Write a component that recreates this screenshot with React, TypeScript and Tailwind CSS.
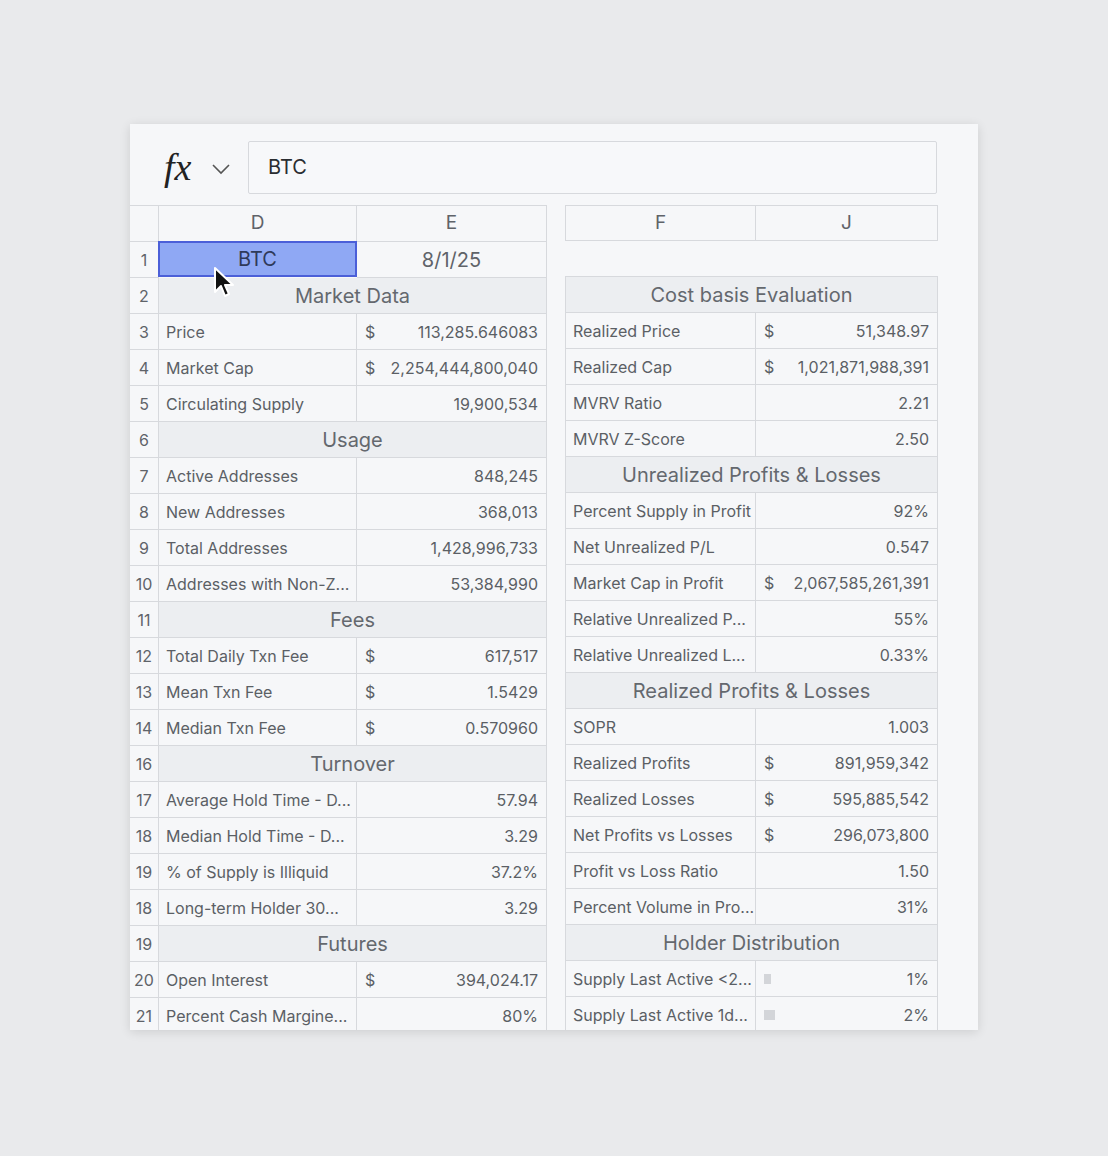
import React from "react";

type Row =
  | { t: "s"; title: string }
  | { t: "d"; label: string; dollar?: boolean; value: string; bar?: number }
  | { t: "e" };

const left: [string, Row][] = [
  ["2", { t: "s", title: "Market Data" }],
  ["3", { t: "d", label: "Price", dollar: true, value: "113,285.646083" }],
  ["4", { t: "d", label: "Market Cap", dollar: true, value: "2,254,444,800,040" }],
  ["5", { t: "d", label: "Circulating Supply", value: "19,900,534" }],
  ["6", { t: "s", title: "Usage" }],
  ["7", { t: "d", label: "Active Addresses", value: "848,245" }],
  ["8", { t: "d", label: "New Addresses", value: "368,013" }],
  ["9", { t: "d", label: "Total Addresses", value: "1,428,996,733" }],
  ["10", { t: "d", label: "Addresses with Non-Z...", value: "53,384,990" }],
  ["11", { t: "s", title: "Fees" }],
  ["12", { t: "d", label: "Total Daily Txn Fee", dollar: true, value: "617,517" }],
  ["13", { t: "d", label: "Mean Txn Fee", dollar: true, value: "1.5429" }],
  ["14", { t: "d", label: "Median Txn Fee", dollar: true, value: "0.570960" }],
  ["16", { t: "s", title: "Turnover" }],
  ["17", { t: "d", label: "Average Hold Time - D...", value: "57.94" }],
  ["18", { t: "d", label: "Median Hold Time - D...", value: "3.29" }],
  ["19", { t: "d", label: "% of Supply is Illiquid", value: "37.2%" }],
  ["18", { t: "d", label: "Long-term Holder 30...", value: "3.29" }],
  ["19", { t: "s", title: "Futures" }],
  ["20", { t: "d", label: "Open Interest", dollar: true, value: "394,024.17" }],
  ["21", { t: "d", label: "Percent Cash Margine...", value: "80%" }],
];

const right: Row[] = [
  { t: "s", title: "Cost basis Evaluation" },
  { t: "d", label: "Realized Price", dollar: true, value: "51,348.97" },
  { t: "d", label: "Realized Cap", dollar: true, value: "1,021,871,988,391" },
  { t: "d", label: "MVRV Ratio", value: "2.21" },
  { t: "d", label: "MVRV Z-Score", value: "2.50" },
  { t: "s", title: "Unrealized Profits & Losses" },
  { t: "d", label: "Percent Supply in Profit", value: "92%" },
  { t: "d", label: "Net Unrealized P/L", value: "0.547" },
  { t: "d", label: "Market Cap in Profit", dollar: true, value: "2,067,585,261,391" },
  { t: "d", label: "Relative Unrealized P...", value: "55%" },
  { t: "d", label: "Relative Unrealized L...", value: "0.33%" },
  { t: "s", title: "Realized Profits & Losses" },
  { t: "d", label: "SOPR", value: "1.003" },
  { t: "d", label: "Realized Profits", dollar: true, value: "891,959,342" },
  { t: "d", label: "Realized Losses", dollar: true, value: "595,885,542" },
  { t: "d", label: "Net Profits vs Losses", dollar: true, value: "296,073,800" },
  { t: "d", label: "Profit vs Loss Ratio", value: "1.50" },
  { t: "d", label: "Percent Volume in Pro...", value: "31%" },
  { t: "s", title: "Holder Distribution" },
  { t: "d", label: "Supply Last Active <2...", value: "1%", bar: 7 },
  { t: "d", label: "Supply Last Active 1d...", value: "2%", bar: 11 },
];

const B = "border-r border-b border-[#d7d9dd]";
const H = "h-[36px]";

function Cells({ r }: { r: Row }) {
  if (r.t === "s")
    return (
      <div className={`${B} ${H} col-span-2 bg-[#eceef1] flex items-center justify-center text-[20px] text-[#64686e]`}>
        {r.title}
      </div>
    );
  if (r.t === "e") return <div className={`${H} col-span-2`} />;
  return (
    <>
      <div className={`${B} ${H} flex items-center px-[7px] text-[16px] text-[#5b5f65] whitespace-nowrap overflow-hidden`}>
        {r.label}
      </div>
      <div className={`${B} ${H} flex items-center px-[8px] text-[16px] text-[#5b5f65] whitespace-nowrap`}>
        {r.dollar && <span>$</span>}
        {r.bar && <span className="bg-[#d3d5d9] h-[10px]" style={{ width: r.bar }} />}
        <span className="ml-auto">{r.value}</span>
      </div>
    </>
  );
}

export default function App() {
  return (
    <div
      className="w-[1108px] h-[1156px] bg-[#e9eaec] pt-[124px] pl-[130px]"
      style={{ fontFamily: "Inter, 'Noto Sans', sans-serif" }}
    >
      <div className="relative w-[848px] h-[906px] bg-[#f6f7f9] shadow-[0_2px_10px_rgba(0,0,0,0.12)] overflow-hidden">
        <div className="flex items-center h-[81px] pt-[5px]">
          <div className="w-[118px] flex items-center pl-[34px]">
            <span className="text-[38px] italic text-[#222]" style={{ fontFamily: "'Liberation Serif', serif" }}>fx</span>
            <svg width="20" height="12" viewBox="0 0 20 12" className="ml-[20px] mt-[4px]">
              <path d="M2 2 L10 10 L18 2" fill="none" stroke="#555" strokeWidth="1.6" />
            </svg>
          </div>
          <div className="w-[689px] h-[53px] border border-[#d7d9dd] rounded-[2px] bg-[#f7f8fa] flex items-center px-[19px] text-[20px] text-[#2a2d31]">
            BTC
          </div>
        </div>
        <div className="flex items-start">
          <div className="grid grid-cols-[29px_198px_190px] border-t border-[#d7d9dd]">
            <div className={`${B} ${H}`} />
            <div className={`${B} ${H} flex items-center justify-center text-[19px] text-[#5f6369]`}>D</div>
            <div className={`${B} ${H} flex items-center justify-center text-[19px] text-[#5f6369]`}>E</div>
            <div className={`${B} ${H} flex items-center justify-center text-[16px] text-[#5f6369]`}>1</div>
            <div className={`${H} border-2 border-[#4b5fd8] bg-[#8fa8f4] flex items-center justify-center text-[20px] text-[#2f3a5a] mt-[-1px] ml-[-1px] z-10`}>BTC</div>
            <div className={`${B} ${H} flex items-center justify-center text-[20px] text-[#5f6369]`}>8/1/25</div>
            {left.map(([n, r], i) => (
              <React.Fragment key={i}>
                <div className={`${B} ${H} flex items-center justify-center text-[16px] text-[#5f6369]`}>{n}</div>
                <Cells r={r} />
              </React.Fragment>
            ))}
          </div>
          <div className="ml-[18px] grid grid-cols-[190px_182px] border-l border-[#d7d9dd]">
            <div className={`${B} ${H} border-t flex items-center justify-center text-[19px] text-[#5f6369]`}>F</div>
            <div className={`${B} ${H} border-t flex items-center justify-center text-[19px] text-[#5f6369]`}>J</div>
            <div className={`${H} col-span-2 border-b border-[#d7d9dd] bg-[#f6f7f9] ml-[-1px]`} />
            {right.map((r, i) => (
              <Cells key={i} r={r} />
            ))}
          </div>
        </div>
        <svg className="absolute left-[83px] top-[142px] z-20" width="26" height="34" viewBox="0 0 26 34">
          <path d="M2 2 L2 26 L8 20 L12 30 L16 28 L12 19 L20 19 Z" fill="#111" stroke="#fff" strokeWidth="2" strokeLinejoin="round" />
        </svg>
      </div>
    </div>
  );
}
